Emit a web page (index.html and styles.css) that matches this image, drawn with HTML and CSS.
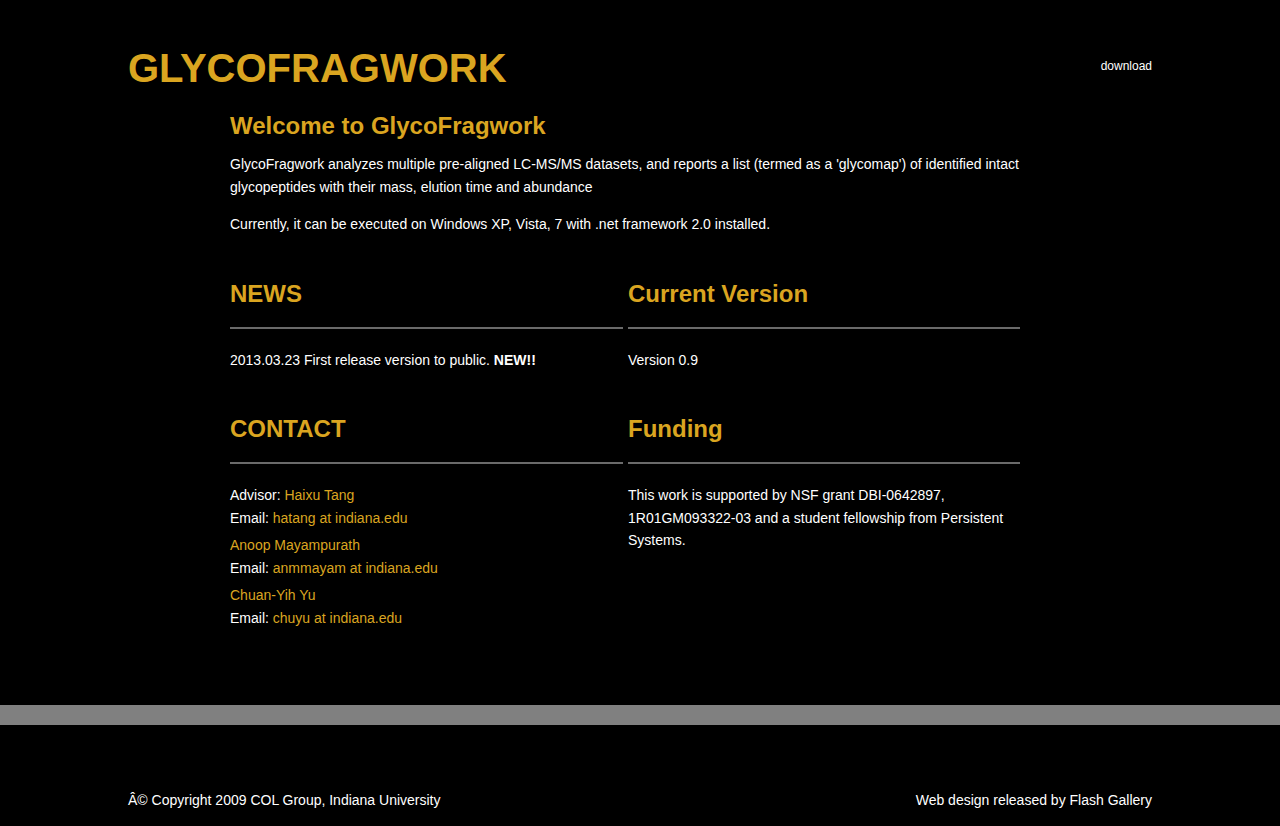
FILE: index.html
```html
<!DOCTYPE html>
<html lang="en">
<head>
<meta charset="utf-8">
<title>GlycoFragwork</title>
<link rel="stylesheet" href="styles.css">
</head>
<body>
<div class="page">
  <header class="masthead">
    <h1 class="logo">GLYCOFRAGWORK</h1>
    <nav class="nav"><a href="#" class="nav-link">download</a></nav>
  </header>
  <main class="content">
    <h2 class="welcome">Welcome to GlycoFragwork</h2>
    <p class="text">GlycoFragwork analyzes multiple pre-aligned LC-MS/MS datasets, and reports a list (termed as a 'glycomap') of identified intact glycopeptides with their mass, elution time and abundance</p>
    <p class="text text-second">Currently, it can be executed on Windows XP, Vista, 7 with .net framework 2.0 installed.</p>

    <div class="grid">
      <section class="box">
        <h3 class="box-title">NEWS</h3>
        <hr class="rule">
        <p class="text">2013.03.23 First release version to public. <strong>NEW!!</strong></p>
      </section>
      <section class="box">
        <h3 class="box-title">Current Version</h3>
        <hr class="rule">
        <p class="text">Version 0.9</p>
      </section>
      <section class="box">
        <h3 class="box-title">CONTACT</h3>
        <hr class="rule">
        <p class="text contact">Advisor: <a href="#" class="link">Haixu Tang</a><br>Email: <a href="#" class="link">hatang at indiana.edu</a></p>
        <p class="text contact"><a href="#" class="link">Anoop Mayampurath</a><br>Email: <a href="#" class="link">anmmayam at indiana.edu</a></p>
        <p class="text contact"><a href="#" class="link">Chuan-Yih Yu</a><br>Email: <a href="#" class="link">chuyu at indiana.edu</a></p>
      </section>
      <section class="box">
        <h3 class="box-title">Funding</h3>
        <hr class="rule">
        <p class="text">This work is supported by NSF grant DBI-0642897, 1R01GM093322-03 and a student fellowship from Persistent Systems.</p>
      </section>
    </div>
  </main>
</div>
<div class="band"></div>
<footer class="footer">
  <span>Â© Copyright 2009 COL Group, Indiana University</span>
  <span>Web design released by Flash Gallery</span>
</footer>
</body>
</html>
```
FILE: styles.css
```css
html, body {
  margin: 0;
  padding: 0;
  background: #000;
  color: #fff;
  font-family: "Liberation Sans", Arial, Helvetica, sans-serif;
}

.page {
  width: 1024px;
  margin: 0 auto;
  padding-top: 45px;
  min-height: 663px;
  box-sizing: border-box;
}

.masthead {
  display: flex;
  justify-content: space-between;
  align-items: flex-start;
}

.logo {
  margin: 0;
  font-size: 40px;
  line-height: 46px;
  font-weight: bold;
  color: #daa520;
}

.nav {
  padding-top: 11px;
}

.nav-link {
  color: #fff;
  font-size: 12px;
  text-decoration: none;
}

.content {
  width: 790px;
  margin: 21px 0 0 102px;
}

.welcome {
  margin: 0 0 13px;
  font-size: 24px;
  line-height: 28px;
  color: #daa520;
}

.text {
  margin: 0;
  font-size: 14px;
  line-height: 22.5px;
  color: #fff;
}

.text-second {
  margin-top: 15px;
}

.grid {
  display: grid;
  grid-template-columns: 393px 392px;
  column-gap: 5px;
  row-gap: 44px;
  margin-top: 44px;
}

.box-title {
  margin: 0;
  font-size: 24px;
  line-height: 28px;
  color: #daa520;
}

.rule {
  border: 0;
  height: 2px;
  background: #6a6a6a;
  margin: 19px 0 20px;
}

.contact + .contact {
  margin-top: 5px;
}

.link {
  color: #daa520;
  text-decoration: none;
}

.band {
  height: 20px;
  background: #808080;
  margin-top: 42px;
}

.footer {
  width: 1024px;
  margin: 0 auto;
  padding-top: 67px;
  display: flex;
  justify-content: space-between;
  font-size: 14px;
  line-height: 16px;
  color: #fff;
}
```
